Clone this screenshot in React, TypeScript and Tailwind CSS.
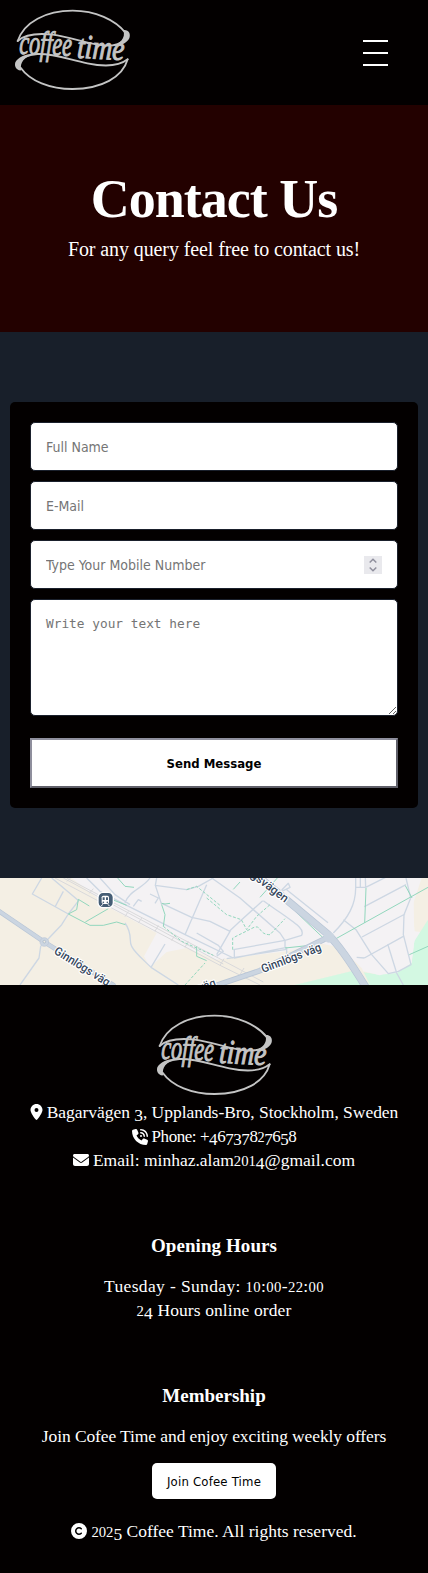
import React from "react";
import { FaLocationDot, FaPhoneVolume, FaEnvelope, FaCopyright } from "react-icons/fa6";

function Logo() {
  return (
    <svg viewBox="36 24 360 252" className="block h-[84px] w-[120px] shrink-0" role="img" aria-label="coffee time">
      <g fill="none" stroke="#c4c4c4" strokeWidth="5.5" strokeLinecap="round">
        <path d="M53 123C72 66 138 32 218 32C286 32 346 60 376 98" />
        <path d="M53 123C75 103 112 99 158 104C215 111 270 136 320 137C345 137 362 132 378 118" />
        <path d="M383 178C368 232 304 267 218 267C150 267 90 243 62 203" />
        <path d="M383 178C355 200 310 200 262 190C205 178 160 160 112 162C84 164 62 175 54 190" />
      </g>
      <g fill="#c4c4c4">
        <path d="M370 90C386 88 393 101 388 115C381 130 360 139 335 139C360 130 378 115 370 90Z" />
        <path d="M64 211C50 213 42 200 46 187C54 172 75 162 100 162C74 172 58 186 64 211Z" />
        <g fontFamily="'Liberation Serif', serif" fontStyle="italic" fontWeight="400" fontSize="102" stroke="#c4c4c4" strokeWidth="3">
          <text transform="translate(57 161) rotate(2.5)" textLength="158" lengthAdjust="spacingAndGlyphs">coffee</text>
          <text transform="translate(230 173) rotate(3)" textLength="142" lengthAdjust="spacingAndGlyphs">time</text>
        </g>
      </g>
    </svg>
  );
}

function StreetMap() {
  return (
    <svg viewBox="0 0 1284 321" className="block h-[107px] w-full" preserveAspectRatio="none">
      <rect width="1284" height="321" fill="#f4f2f4" />
      <path d="M0 0H215L330 90L470 165L432 235L450 268L500 222L560 210L650 245L860 220L960 196L1050 215L1130 290L900 321H0Z" fill="#f4efe4" />
      <path d="M1265 0H1284V165L1244 160L1235 90Z" fill="#f4efe4" />
      <path d="M885 321L1060 278L1140 290L1190 285L1235 255L1243 190L1284 125V321Z" fill="#d3f8e2" />
      <path d="M985 155L1050 270L1140 292L1234 255L1243 190L1240 0H1000Z" fill="#f4f2f4" />
      <path d="M985 175L1085 270L1110 321H885L1060 278Z" fill="#f4efe4" />
      <path d="M885 321L1070 276L1110 321Z" fill="#d3f8e2" />
      <g fill="none" stroke="#d9d9db" strokeWidth="3">
        <path d="M165 0L660 262L780 321M200 0L655 240L790 312M190 0L670 258" />
        <path d="M200 10L212 0M268 46L280 32M375 116L385 100M415 135L425 120M465 160L475 142M515 188L525 170M555 208L565 190M660 262L672 242M720 290L732 270" />
      </g>
      <g fill="none" stroke="#cdd7e3" strokeWidth="4" strokeLinejoin="round">
        <path d="M125 0L97 48L205 108L236 68L155 0M190 40L165 87M205 108L185 140L145 182L133 192L122 205L117 240L60 321" />
        <path d="M260 0L300 40L380 82L560 172L700 240" />
        <path d="M300 0L345 50L390 80M375 75C385 40 430 30 450 0M470 0L466 22L560 35L595 25L640 0M466 22L485 80M450 48L475 60L465 76M400 85L415 65L425 70" />
        <path d="M485 76L575 118L630 130L690 160L650 230M620 20L555 170M635 0L720 60L840 165L855 188L855 208M590 165L655 202L670 220L650 235M375 135C400 170 385 190 395 205C405 225 430 245 453 268L535 321M495 198L453 268" />
        <path d="M688 160L720 130L788 68M700 215L855 187L905 172C915 150 890 140 790 68M703 213V240L860 208M680 242L860 214M860 208V235M846 35L865 16L870 28L850 38ZM860 35L984 134" />
        <path d="M1067 0V30C1067 80 1045 120 1000 165M1067 28H1097L1096 0M1081 0V28M1097 28L1165 -6M1093 86L1218 20M1086 177L1215 108M1232 60L1212 110L1210 170L1233 260L1195 280L1165 287L1115 230L1068 155L1030 125M1093 240L1210 175M1070 238L1093 240M1163 198L1190 285L1210 321M1218 0L1232 60" />
      </g>
      <g fill="none" stroke="#92d7bd" strokeWidth="3">
        <path d="M235 64L230 95L205 108L270 142H310L350 132L376 140M235 64L268 84M256 132L325 92M340 66L380 82M353 0L375 25L402 28M485 76L495 78L510 76M485 80L495 110L490 145M590 205V235L620 248M700 34L720 12M780 58L832 0M860 75L970 180M855 210L950 200M1008 182L1284 28M1094 135L1098 30M1216 23L1236 60M1228 230L1284 205" />
        <path d="M490 145L545 190L640 232M560 35L590 25L660 82M620 60L680 110L724 125L740 155L770 115L810 80M698 215V180L762 148C785 140 775 170 810 170L855 122M555 321L615 255" strokeDasharray="9 5" />
      </g>
      <g fill="none" stroke="#b9c6d6" strokeLinecap="round">
        <path d="M-5 98L133 192L340 321" strokeWidth="14" />
        <path d="M640 325L780 278L970 185L985 175" strokeWidth="17" />
        <path d="M780 0L865 70L985 170Q1030 215 1100 332" strokeWidth="23" />
      </g>
      <g fill="none" stroke="#cbd5e1" strokeLinecap="round">
        <path d="M-5 98L133 192L340 321" strokeWidth="10" />
        <path d="M640 325L780 278L970 185L985 175" strokeWidth="12" />
        <path d="M780 0L865 70L985 170Q1030 215 1100 332" strokeWidth="19" />
      </g>
      <circle cx="987" cy="178" r="16" fill="#cbd5e1" />
      <circle cx="133" cy="192" r="13" fill="#cbd5e1" stroke="#b9c6d6" strokeWidth="2" />
      <circle cx="133" cy="191" r="4" fill="#f1ede4" stroke="#9fb0c2" strokeWidth="2" />
      <g fontFamily="Roboto, sans-serif" fontWeight="500" fontSize="35" fill="#35465c" stroke="#fff" strokeWidth="7" strokeLinejoin="round" paintOrder="stroke">
        <text transform="translate(160 225) rotate(32)" textLength="190" lengthAdjust="spacingAndGlyphs">Ginnlögs väg</text>
        <text transform="translate(789 285) rotate(-21)" textLength="190" lengthAdjust="spacingAndGlyphs">Ginnlögs väg</text>
        <text transform="translate(735 -16) rotate(37)" textLength="150" lengthAdjust="spacingAndGlyphs">ngsvägen</text>
        <text transform="translate(470 386) rotate(-19)" textLength="190" lengthAdjust="spacingAndGlyphs">Ginnlögs väg</text>
      </g>
      <rect x="294" y="43" width="46" height="46" rx="15" fill="#455d75" stroke="#fff" strokeWidth="4" />
      <rect x="305" y="53" width="22" height="25" rx="5" fill="#fff" />
      <path d="M308 58H314V66H308ZM318 58H324V66H318Z" fill="#455d75" />
      <circle cx="310" cy="73" r="2.5" fill="#455d75" />
      <circle cx="322" cy="73" r="2.5" fill="#455d75" />
      <path d="M308 79L304 84M324 79L328 84" stroke="#fff" strokeWidth="3" />
    </svg>
  );
}

/* Digits set old-style: 0-2 at x-height, 3 4 5 7 9 dropped below the baseline. */
function OldStyle({ text }: { text: string }) {
  return (
    <>
      {text.split(/(\d)/).map((part, i) => {
        if (/^[012]$/.test(part)) return <span key={i} className="text-[0.84em] leading-none">{part}</span>;
        if (/^[34579]$/.test(part)) return <span key={i} className="relative top-[0.18em] leading-none">{part}</span>;
        return part;
      })}
    </>
  );
}

const field =
  "block w-full rounded-[5px] border border-[#1a202c] bg-white px-[15px] text-black placeholder:text-[#757575] outline-none";

export default function App() {
  return (
    <div className="w-full bg-[#030000] font-['Liberation_Serif',serif] text-white">
      <header className="flex h-[105px] items-start justify-between pt-2 pr-10 pl-3">
        <Logo />
        <button aria-label="Menu" className="mt-8 flex w-[25px] flex-col gap-[10px]">
          <span className="h-0.5 w-full bg-white" />
          <span className="h-0.5 w-full bg-white" />
          <span className="h-0.5 w-full bg-white" />
        </button>
      </header>

      <section className="flex h-[227px] flex-col items-center bg-[#230100] pt-[60px] text-center whitespace-nowrap">
        <h1 className="text-[54px] leading-[68px] font-bold tracking-[-1px]">Contact Us</h1>
        <p className="mt-[3px] text-[20px] leading-[26px] tracking-[-0.1px]">For any query feel free to contact us!</p>
      </section>

      <section className="h-[546px] bg-[#181f2a] px-[10px] pt-[70px]">
        <form className="flex h-[406px] flex-col rounded-[5px] bg-[#030000] p-5 font-['DejaVu_Sans_Condensed','DejaVu_Sans',sans-serif]">
          <div className="flex flex-col gap-[10px]">
            <input className={`${field} h-[49px] text-[14px]`} placeholder="Full Name" />
            <input className={`${field} h-[49px] text-[14px]`} placeholder="E-Mail" />
            <div className={`${field} flex h-[49px] items-center justify-between`}>
              <input className="w-[260px] pt-px text-[14px] outline-none placeholder:text-[#757575]" placeholder="Type Your Mobile Number" />
              <svg viewBox="0 0 18 18" className="size-[18px] bg-[#e9e9ed]" fill="none" stroke="#8f8f9d" strokeWidth="1.5">
                <path d="M5.7 6.5L9 3.3L12.3 6.5M5.7 11.5L9 14.7L12.3 11.5" />
              </svg>
            </div>
            <textarea
              className={`${field} h-[117px] resize pt-4 font-['DejaVu_Sans_Mono',monospace] text-[12.8px] leading-[16px]`}
              placeholder="Write your text here"
            />
          </div>
          <button type="button" className="mt-[22px] h-[50px] border-2 border-t-[#8f8f9d] border-r-[#5f5f69] border-b-[#5f5f69] border-l-[#8f8f9d] bg-white pt-px text-[13px] font-bold text-black">
            Send Message
          </button>
        </form>
      </section>

      <StreetMap />

      <footer className="flex h-[588px] flex-col items-center pt-7 text-center text-[17.5px] leading-6 whitespace-nowrap">
        <Logo />
        <div className="mt-[3px] flex h-6 items-center gap-1 tracking-[-0.04px]">
          <FaLocationDot className="h-4 w-[13px]" />
          <span><OldStyle text="Bagarvägen 3, Upplands-Bro, Stockholm, Sweden" /></span>
        </div>
        <div className="flex h-6 items-center gap-1 pt-0.5 text-[17px] tracking-[-0.45px]">
          <FaPhoneVolume className="size-4" />
          <span><OldStyle text="Phone: +46737827658" /></span>
        </div>
        <div className="flex h-6 items-center gap-1">
          <FaEnvelope className="size-4" />
          <span><OldStyle text="Email: minhaz.alam2014@gmail.com" /></span>
        </div>
        <h2 className="mt-[62px] h-6 text-[19px] leading-6 font-bold tracking-[0.08px]">Opening Hours</h2>
        <p className="mt-4 h-6 tracking-[0.37px]"><OldStyle text="Tuesday - Sunday: 10:00-22:00" /></p>
        <p className="h-6 tracking-[0.1px]"><OldStyle text="24 Hours online order" /></p>
        <h2 className="mt-[62px] h-6 text-[19px] leading-6 font-bold">Membership</h2>
        <p className="mt-4 h-6 tracking-[-0.1px]">Join Cofee Time and enjoy exciting weekly offers</p>
        <button className="mt-[15px] h-9 w-[124px] rounded-[5px] bg-white pt-px font-['DejaVu_Sans_Condensed','DejaVu_Sans',sans-serif] text-[13px] tracking-[0.2px] text-black">
          Join Cofee Time
        </button>
        <div className="mt-5 flex h-6 items-center gap-1">
          <FaCopyright className="size-4" />
          <span><OldStyle text="2025 Coffee Time. All rights reserved." /></span>
        </div>
      </footer>
    </div>
  );
}
